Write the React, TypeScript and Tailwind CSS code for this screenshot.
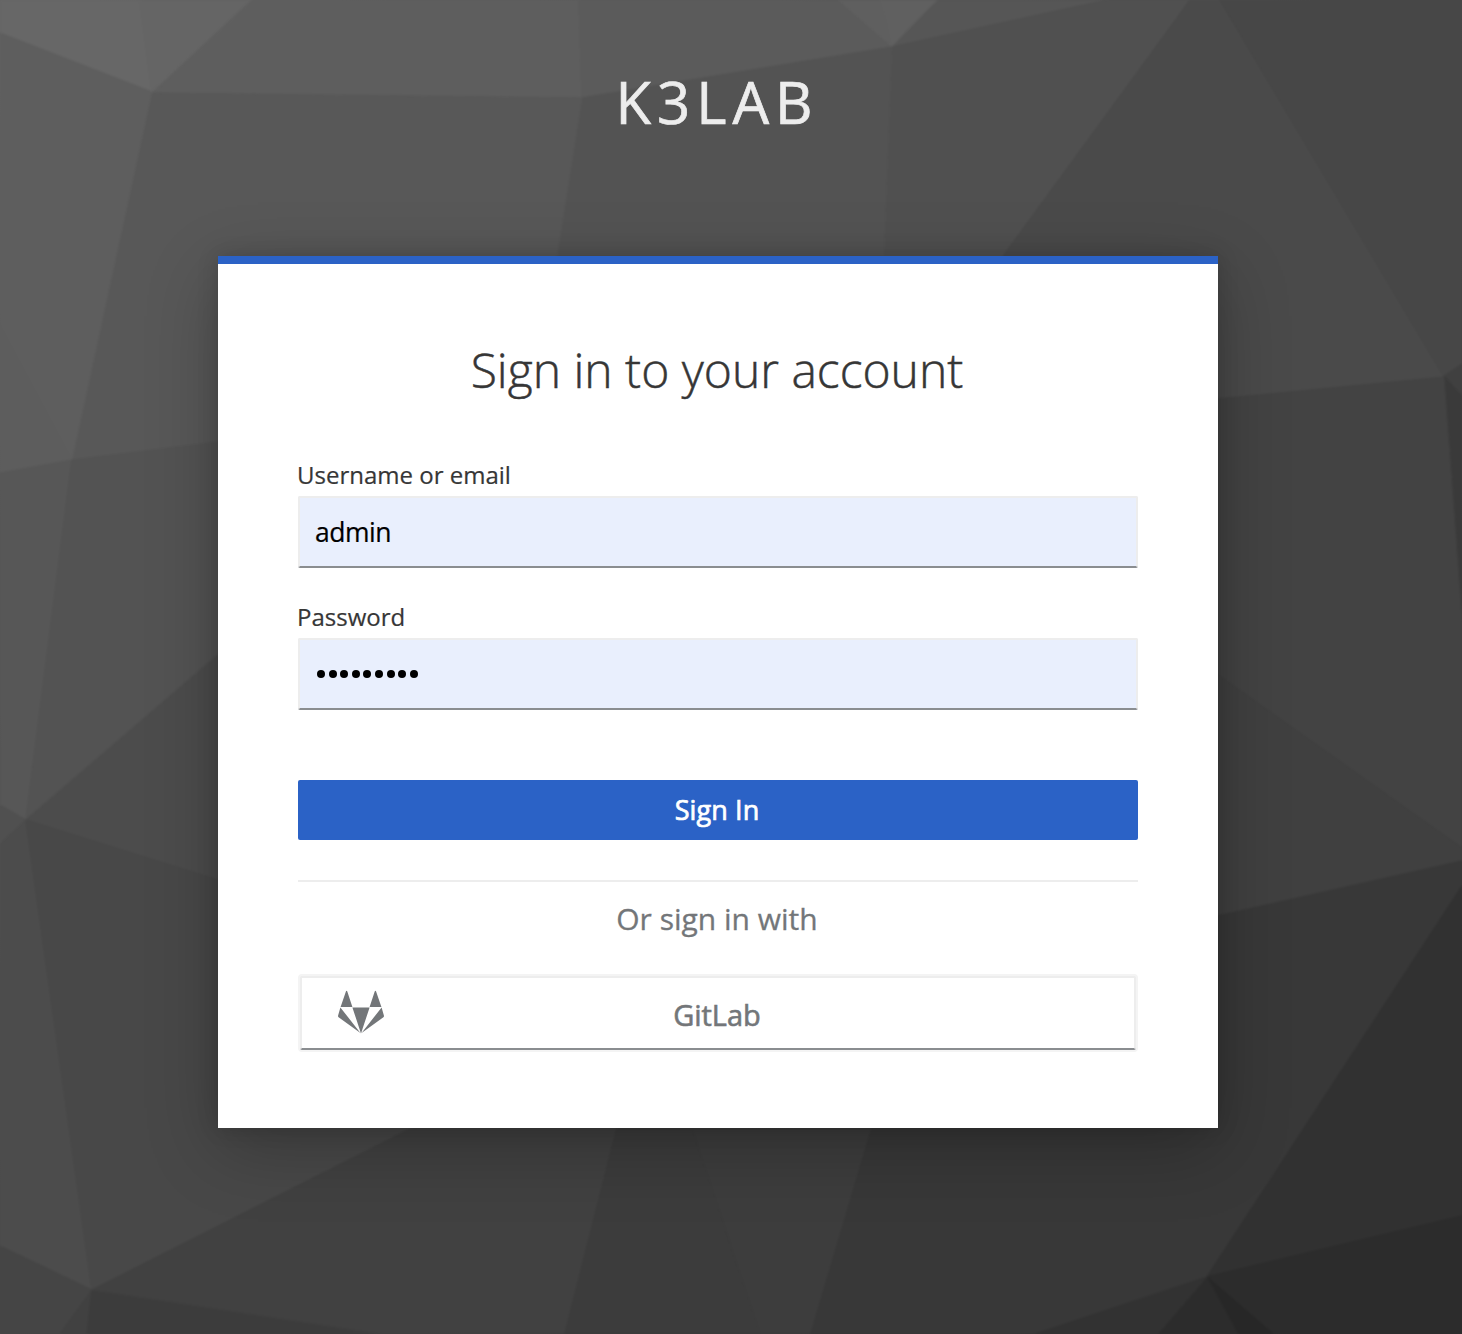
import React from "react";

type Facet = { points: string; fill: string };

const facets: Facet[] = [
  { points: "0,0 140,0 152,92 0,33", fill: "#676767" },
  { points: "140,0 252,0 152,92", fill: "#656565" },
  { points: "252,0 579,0 582,98 152,93", fill: "#5e5e5e" },
  { points: "579,0 838,0 892,47 582,98", fill: "#5b5b5b" },
  { points: "838,0 880,0 892,47", fill: "#5f5f5f" },
  { points: "880,0 938,0 892,47", fill: "#606060" },
  { points: "938,0 1107,0 892,47", fill: "#565656" },
  { points: "1107,0 1190,0 1005,256 500,960 884,256 892,47", fill: "#505050" },
  { points: "582,98 892,47 884,256 880,700 480,700 557,256", fill: "#535353" },
  { points: "152,93 582,98 557,256 480,700 218,442 72,460", fill: "#585858" },
  { points: "1190,0 1220,0 1445,378 1218,399 900,420 1003,256", fill: "#4a4a4a" },
  { points: "1220,0 1462,0 1462,365 1444,377", fill: "#474747" },
  { points: "1444,376 1462,364 1462,396", fill: "#404040" },
  { points: "1444,376 1462,396 1462,620", fill: "#3a3a3a" },
  { points: "0,33 152,92 72,460 0,473", fill: "#5e5e5e" },
  { points: "0,325 72,460 0,473", fill: "#5d5d5d" },
  { points: "0,473 72,460 26,820 0,805", fill: "#575757" },
  { points: "72,460 218,442 400,420 400,510 218,655 26,820", fill: "#535353" },
  { points: "26,820 218,655 400,500 400,960 218,880", fill: "#4c4c4c" },
  { points: "0,805 26,820 0,844", fill: "#505050" },
  { points: "0,844 26,820 92,1290 0,1246", fill: "#4c4c4c" },
  { points: "26,820 218,880 500,960 500,1088 412,1128 92,1290", fill: "#484848" },
  { points: "0,1246 92,1290 60,1334 0,1334", fill: "#454545" },
  { points: "60,1334 92,1290 87,1334", fill: "#414141" },
  { points: "87,1334 92,1290 380,1334", fill: "#3c3c3c" },
  { points: "92,1290 412,1128 617,1128 565,1334 380,1334", fill: "#414141" },
  { points: "617,1128 692,1128 760,1334 565,1334", fill: "#3c3c3c" },
  { points: "692,1128 872,1128 811,1334 760,1334", fill: "#3d3d3d" },
  { points: "1444,377 1462,620 1462,848 1218,675 1100,600 1100,409 1218,399", fill: "#434343" },
  { points: "1100,590 1218,675 1462,848 1462,861 1218,916 1100,943", fill: "#404040" },
  { points: "872,1128 900,960 1218,916 1462,861 1462,886 1207,1277 1035,1334 811,1334", fill: "#383838" },
  { points: "1462,886 1462,1216 1207,1277", fill: "#313131" },
  { points: "1207,1277 1462,1216 1462,1334 1273,1334", fill: "#2c2c2c" },
  { points: "1207,1277 1273,1334 1238,1334", fill: "#272727" },
  { points: "1207,1277 1238,1334 1158,1334", fill: "#2c2c2c" },
  { points: "1207,1277 1158,1334 1035,1334", fill: "#323232" },
];

function Backdrop() {
  return (
    <svg className="absolute inset-0 h-full w-full" viewBox="0 0 1462 1334" aria-hidden="true">
      <defs>
        <linearGradient id="base" x1="0" y1="0" x2="1" y2="1">
          <stop offset="0" stopColor="#666666" />
          <stop offset="0.5" stopColor="#484848" />
          <stop offset="1" stopColor="#2c2c2c" />
        </linearGradient>
      </defs>
      <rect width="1462" height="1334" fill="url(#base)" />
      <g className="blur-[0.8px]">
        {facets.map((f) => (
          <polygon key={f.points} points={f.points} fill={f.fill} stroke={f.fill} strokeWidth="1" />
        ))}
      </g>
    </svg>
  );
}

function GitLabMark() {
  return (
    <svg className="h-[44px] w-[48px]" viewBox="0 0 48 44" fill="#737679" aria-hidden="true">
      <path d="M8.9 1.4q.7-1.2 1.4 0L15.4 16.9H3.6zM37.7 1.4q.7-1.2 1.4 0L44.4 16.9H32.6zM15.4 17.4h17.2L24 43.6zM3.4 17.4 23.4 43 1.6 27.3Q.8 26.6 1.1 25.6zM44.6 17.4 24.6 43 46.4 27.3q.8-.7.5-1.7z" />
    </svg>
  );
}

type FieldProps = { id: string; label: string; type: string; value: string };

function Field({ id, label, type, value }: FieldProps) {
  const secret = type === "password";
  return (
    <div className="flex flex-col">
      <label htmlFor={id} className="-ml-px h-[42px] text-[24px] leading-[41px] text-[#363636] [-webkit-text-stroke:0.2px]">
        {label}
      </label>
      <div className="flex h-[72px] items-center rounded-[2px] border-2 border-[#ededed] border-b-[#8a8d90] bg-[#e9effd] px-[15px]">
        {secret ? (
          <span id={id} className="flex gap-[3.6px] pl-0.5" aria-label={label}>
            {value.split("").map((_, i) => (
              <i key={i} className="block size-2 rounded-full bg-black" />
            ))}
          </span>
        ) : (
          <input
            id={id}
            type={type}
            defaultValue={value}
            className="w-full bg-transparent pt-0.5 text-[26.5px] tracking-[-0.5px] text-black outline-none [-webkit-text-stroke:0.2px]"
          />
        )}
      </div>
    </div>
  );
}

export default function App() {
  return (
    <div className="relative h-[1334px] w-[1462px] overflow-hidden font-['Open_Sans',sans-serif]">
      <Backdrop />
      <div className="relative flex w-[1436px] flex-col items-center">
        <header className="flex h-[256px] items-start pt-[62px]">
          <h1 className="pr-0.5 text-[58px] leading-[80px] tracking-[6px] text-[#ededed] [-webkit-text-stroke:0.7px]">K3LAB</h1>
        </header>
        <main className="flex h-[872px] w-[1000px] flex-col border-t-8 border-[#2b62c6] bg-white px-20 shadow-[0_20px_68px_rgba(0,0,0,0.24),0_0_20px_rgba(0,0,0,0.16)]">
          <h2 className="mt-[74px] pr-0.5 text-center text-[48px] leading-[64px] font-light whitespace-nowrap text-[#363636] [-webkit-text-stroke:0.5px]">
            Sign in to your account
          </h2>
          <form className="mt-[52px] flex flex-col gap-7" onSubmit={(e) => e.preventDefault()}>
            <Field id="username" label="Username or email" type="text" value="admin" />
            <Field id="password" label="Password" type="password" value="•••••••••" />
            <button className="mt-[42px] h-[60px] rounded-[2px] bg-[#2b62c6] pr-0.5 text-[27px] font-medium tracking-[0.1px] text-white [-webkit-text-stroke:0.7px]">
              Sign In
            </button>
          </form>
          <div className="mt-10 border-t-2 border-[#ededed]" />
          <h3 className="mt-[15px] mb-px pr-0.5 text-center text-[30px] leading-[44px] text-[#737679] [-webkit-text-stroke:0.3px]">
            Or sign in with
          </h3>
          <a className="mx-0.5 mt-[34px] flex h-[74px] items-center rounded-[2px] border-2 border-[#ededed] border-b-[#8a8d90] shadow-[0_0_0_2px_#f4f4f4]">
            <span className="mb-[3px] ml-[35px] flex w-12">
              <GitLabMark />
            </span>
            <span className="mt-1 mr-[85px] flex-1 text-center text-[29px] font-medium text-[#737679] [-webkit-text-stroke:0.6px]">
              GitLab
            </span>
          </a>
        </main>
      </div>
    </div>
  );
}
